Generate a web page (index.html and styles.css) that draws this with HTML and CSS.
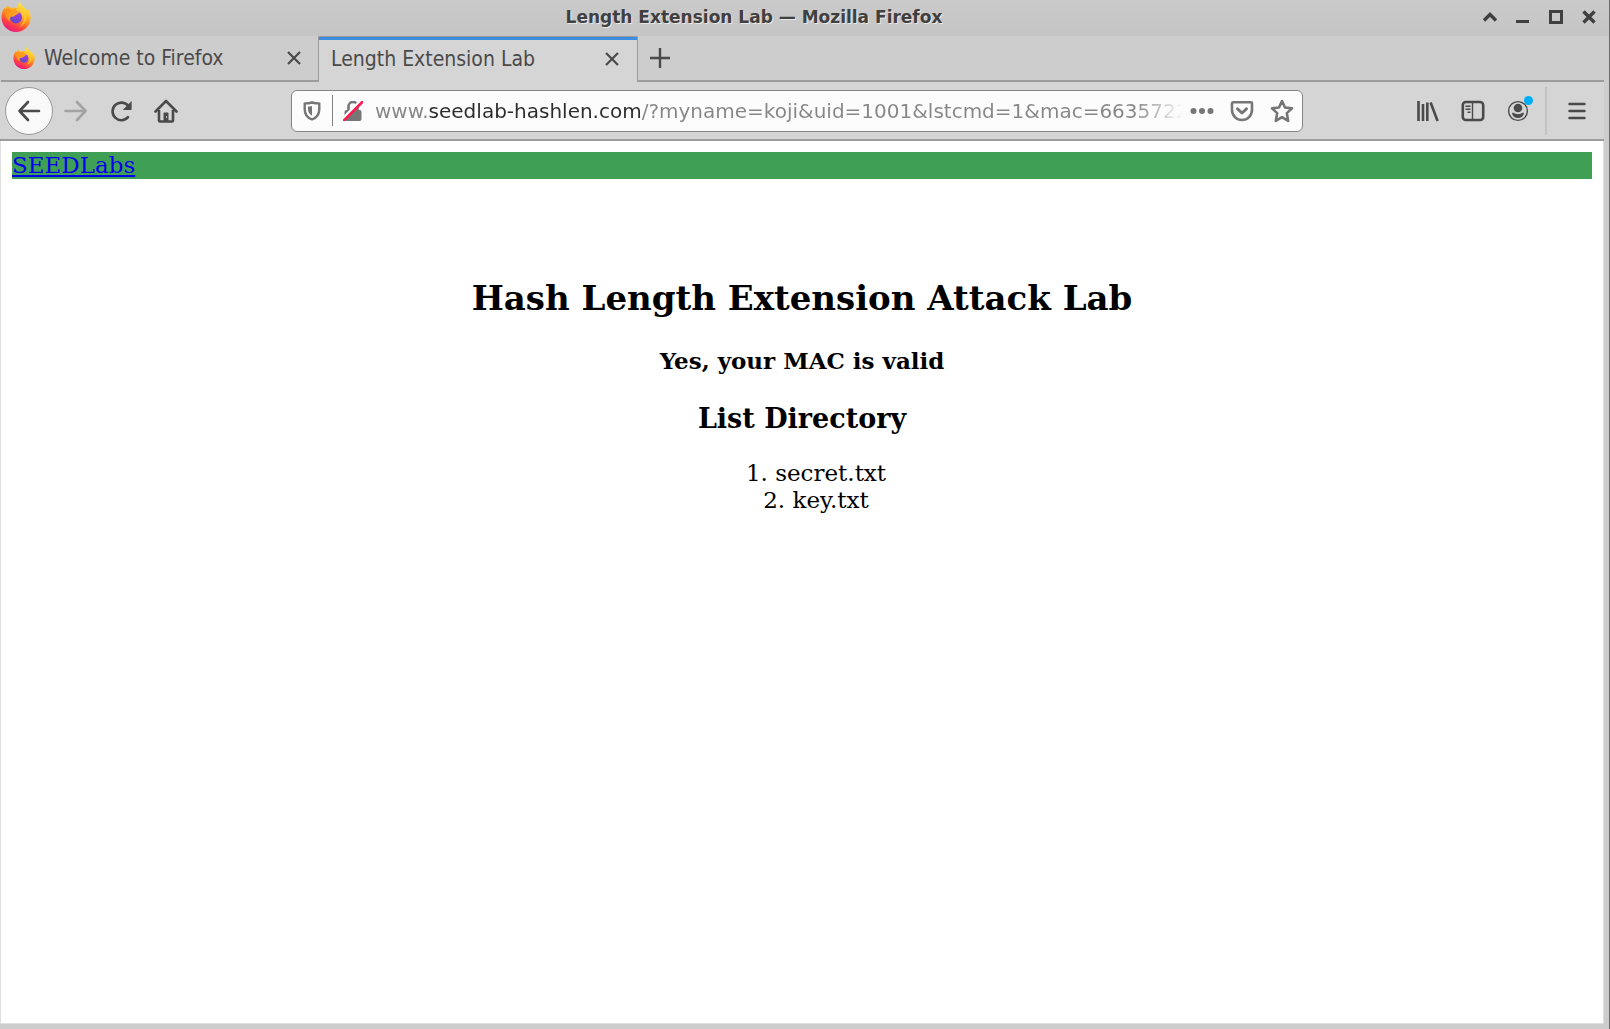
FILE: index.html
```html
<!DOCTYPE html>
<html lang="en">
<head>
<meta charset="utf-8">
<title>Length Extension Lab — Mozilla Firefox</title>
<link rel="stylesheet" href="styles.css">
</head>
<body>
<svg class="defs" width="0" height="0" aria-hidden="true">
  <defs>
    <linearGradient id="flame" x1="0.8" y1="0" x2="0.3" y2="1">
      <stop offset="0" stop-color="#fff04a"/>
      <stop offset="0.3" stop-color="#ffc52e"/>
      <stop offset="0.55" stop-color="#ff8420"/>
      <stop offset="0.78" stop-color="#ff3b47"/>
      <stop offset="1" stop-color="#e31587"/>
    </linearGradient>
    <linearGradient id="globe" x1="0.7" y1="0" x2="0.3" y2="1">
      <stop offset="0" stop-color="#a637e8"/>
      <stop offset="1" stop-color="#5a4fc4"/>
    </linearGradient>
    <linearGradient id="mane" x1="0" y1="0" x2="1" y2="1">
      <stop offset="0" stop-color="#ff8a16"/>
      <stop offset="1" stop-color="#ffb02a"/>
    </linearGradient>
    <symbol id="firefox" viewBox="0 0 30 31">
      <path fill="url(#flame)" d="M19 .5c-2 2-2.500 4-2 6-2-.5-4-.5-6-.1C10 6.400 9.500 6.200 8 5.200 7.300 4.800 7 4.300 6.800 3.800 5.500 4.800 5 6.300 5 7.800 4.300 7.600 4 6.800 4 5.800 1.500 8.500.5 12 .5 16a14.500 14.500 0 0 0 29.200 0c0-3.500-1-6.500-2.800-8.500.2 1 .2 1.800 0 2.500-1-2-2.400-3-4-4.300C21.300 4.300 20 3 19 .5z"/>
      <circle cx="15" cy="16" r="6" fill="url(#globe)"/>
      <path fill="url(#mane)" d="M4.500 8c2-1 5-1 7 .5 1.500-1.500 3-1.800 4.500-1.500-1 1-1.500 2-1.200 3l3.200.7c0 1.500-1.500 2-3.500 2.800-.7 1.500-2 2-3.500 1.500-2.500.5-3 2.500-2 5C5 17 3.500 12 4.500 8z"/>
      <path fill="#ffcf35" opacity=".7" d="M20 5c4 3 6 7 5.500 12-.5 4-3 7-7 8.500 4-4 5-8 3-12-1-2-2-4.500-1.500-8.500z"/>
    </symbol>
    <symbol id="cross" viewBox="0 0 14 14">
      <path d="M1 1l12 12M13 1L1 13" fill="none" stroke="currentColor" stroke-width="2.200"/>
    </symbol>
  </defs>
</svg>
<div class="window">
  <header class="titlebar">
    <svg class="app-icon" aria-hidden="true"><use href="#firefox"/></svg>
    <div class="window-title">Length Extension Lab — Mozilla Firefox</div>
    <div class="window-controls">
      <button type="button" aria-label="Shade"><svg width="14" height="14" viewBox="0 0 14 14"><path d="M1 10.500l6-6 6 6" fill="none" stroke="currentColor" stroke-width="3.400"/></svg></button>
      <button type="button" aria-label="Minimize"><svg width="14" height="14" viewBox="0 0 14 14"><path d="M0 11.500h13" stroke="currentColor" stroke-width="3"/></svg></button>
      <button type="button" aria-label="Maximize"><svg width="14" height="14" viewBox="0 0 14 14"><path d="M1.500 1.500h11v11h-11z" fill="none" stroke="currentColor" stroke-width="3"/></svg></button>
      <button type="button" aria-label="Close window"><svg width="14" height="14" viewBox="0 0 14 14"><path d="M1.500 1.500l11 11M12.500 1.500l-11 11" stroke="currentColor" stroke-width="3.400"/></svg></button>
    </div>
  </header>

  <div class="tabs">
    <div class="tab">
      <svg class="favicon" aria-hidden="true"><use href="#firefox"/></svg>
      <span class="tab-label">Welcome to Firefox</span>
      <button class="tab-close" type="button" aria-label="Close tab"><svg width="14" height="14"><use href="#cross"/></svg></button>
    </div>
    <div class="tab selected">
      <span class="tab-label">Length Extension Lab</span>
      <button class="tab-close" type="button" aria-label="Close tab"><svg width="14" height="14"><use href="#cross"/></svg></button>
    </div>
    <div class="tab-rest">
      <button class="new-tab" type="button" aria-label="New tab"><svg width="20" height="20" viewBox="0 0 20 20"><path d="M10 0v20M0 10h20" stroke="currentColor" stroke-width="2.400"/></svg></button>
    </div>
  </div>

  <nav class="toolbar" aria-label="Navigation">
    <button class="back" type="button" aria-label="Back"><svg width="24" height="24" viewBox="0 0 24 24"><path d="M22 12H2.500M11 3L2.500 12l8.500 9" fill="none" stroke="currentColor" stroke-width="2.600" stroke-linecap="round" stroke-linejoin="round"/></svg></button>
    <button class="tool" type="button" aria-label="Forward" disabled><svg width="24" height="24" viewBox="0 0 24 24"><path d="M1.500 12h20M13 3l8.500 9-8.500 9" fill="none" stroke="currentColor" stroke-width="2.600" stroke-linecap="round" stroke-linejoin="round"/></svg></button>
    <button class="tool" type="button" aria-label="Reload"><svg width="24" height="24" viewBox="0 0 24 24"><path d="M19 18.200A8.800 8.800 0 1 1 19.300 7" fill="none" stroke="currentColor" stroke-width="2.600" stroke-linecap="round"/><path d="M22.600 2v8.200a.8.800 0 0 1-.8.800h-8z" fill="currentColor"/></svg></button>
    <button class="tool" type="button" aria-label="Home"><svg width="24" height="24" viewBox="0 0 24 24"><path d="M1.500 12.500L12 2l10.500 10.500" fill="none" stroke="currentColor" stroke-width="2.600" stroke-linecap="round" stroke-linejoin="round"/><path d="M5 11v10.500a1 1 0 0 0 1 1h12a1 1 0 0 0 1-1V11" fill="none" stroke="currentColor" stroke-width="2.600"/><path d="M9.500 22v-7.500a1 1 0 0 1 1-1h3a1 1 0 0 1 1 1V22z" fill="currentColor"/><path d="M12.600 17.200v1.600" stroke="#d5d5d5"/></svg></button>

    <div class="urlbar">
      <button class="shield" type="button" aria-label="Tracking protection"><svg width="18" height="20" viewBox="0 0 18 20"><path d="M9 1.500c2.500.7 5 .9 7.300.9v5.800c0 4.800-2.800 8.600-7.300 10.300C4.500 16.800 1.700 13 1.700 8.200V2.400c2.300 0 4.800-.2 7.300-.9z" fill="none" stroke="currentColor" stroke-width="2.400" stroke-linejoin="round"/><path d="M9 5v9.800C6.500 13.500 5 11.200 5 8.300V5.600C6.500 5.600 7.800 5.400 9 5z" fill="currentColor"/></svg></button>
      <span class="url-divider"></span>
      <button class="lock" type="button" aria-label="Connection is not secure"><svg width="20" height="20" viewBox="0 0 20 20"><path d="M5.500 10V5.500a4.500 4.500 0 0 1 9 0V10" fill="none" stroke="currentColor" stroke-width="2.600"/><rect x="1.500" y="9" width="17" height="11" rx="2" fill="currentColor"/><path d="M-.5 18L18 -.5" stroke="#fcfcfc" stroke-width="3"/><path d="M1 19.300L19.300 1" stroke="#ff1a50" stroke-width="2.600" stroke-linecap="round"/></svg></button>
      <input class="url" type="text" aria-label="Address" spellcheck="false" value="www.seedlab-hashlen.com/?myname=koji&amp;uid=1001&amp;lstcmd=1&amp;mac=6635722">
      <div class="page-actions">
        <button type="button" aria-label="Page actions"><svg width="24" height="24" viewBox="0 0 24 24" fill="currentColor"><circle cx="3.500" cy="12" r="3"/><circle cx="12" cy="12" r="3"/><circle cx="20.500" cy="12" r="3"/></svg></button>
        <button type="button" aria-label="Save to Pocket"><svg width="24" height="24" viewBox="0 0 24 24" fill="none" stroke="currentColor" stroke-width="2.600" stroke-linecap="round" stroke-linejoin="round"><path d="M3 3.300h18a1 1 0 0 1 1 1V11a10 10 0 0 1-20 0V4.300a1 1 0 0 1 1-1z"/><path d="M7.500 9.800l4.500 4.200 4.500-4.200" stroke-width="3"/></svg></button>
        <button type="button" aria-label="Bookmark this page"><svg width="24" height="24" viewBox="0 0 24 24"><path d="M12 2l3 6.500 7 .9-5.200 4.700 1.400 7.800L12 18.200l-6.200 3.700 1.400-7.800L2 9.400l7-.9z" fill="none" stroke="currentColor" stroke-width="2.600" stroke-linejoin="round"/></svg></button>
      </div>
    </div>

    <button class="tool" type="button" aria-label="Library"><svg width="24" height="24" viewBox="0 0 24 24" fill="none" stroke="currentColor" stroke-width="2.600"><path d="M2.500 2v20M7 5v17M11.300 3.500V22M14.600 3.500l7 18.500"/></svg></button>
    <button class="tool" type="button" aria-label="Sidebars"><svg width="24" height="24" viewBox="0 0 24 24" fill="none" stroke="currentColor"><rect x="1.800" y="3" width="20.400" height="18" rx="3" stroke-width="2.600"/><path d="M11.500 3v18" stroke-width="1.400"/><path d="M4.500 7.200h5M4.500 10.200h5M6.500 13.200h3" stroke-width="1.400"/></svg></button>
    <button class="tool account" type="button" aria-label="Account"><svg width="24" height="24" viewBox="0 0 24 24"><circle cx="12" cy="12" r="9.400" fill="none" stroke="currentColor" stroke-width="1.400"/><circle cx="12" cy="9" r="4.300" fill="currentColor"/><path d="M6 14c1.500-.7 2.500.3 3.500.8 1.500.6 3.500.6 5 0 1-.5 2-1.500 3.500-.8-.5 3.200-2.800 5-6 5s-5.500-1.800-6-5z" fill="currentColor"/></svg><span class="badge"></span></button>
    <span class="tool-divider"></span>
    <button class="tool menu" type="button" aria-label="Open menu"><svg width="24" height="24" viewBox="0 0 24 24"><path d="M4.500 5h15M4.500 12h15M4.500 19h15" stroke="currentColor" stroke-width="2.400" stroke-linecap="round"/></svg></button>
  </nav>

  <main class="page">
    <div class="banner"><a href="#">SEEDLabs</a></div>
    <section class="content">
      <h1>Hash Length Extension Attack Lab</h1>
      <p class="status">Yes, your MAC is valid</p>
      <h2>List Directory</h2>
      <ol>
        <li>secret.txt</li>
        <li>key.txt</li>
      </ol>
    </section>
  </main>
</div>
</body>
</html>
```
FILE: styles.css
```css
* { box-sizing: border-box; }

body {
  margin: 0;
  background: #cdcdcd;
  font-family: "DejaVu Sans", sans-serif;
  color: #4a4a4a;
}

button {
  display: flex;
  align-items: center;
  justify-content: center;
  flex: none;
  margin: 0;
  padding: 0;
  border: 0;
  background: none;
  color: inherit;
}

svg { display: block; flex: none; }
.defs { position: absolute; }

.window {
  display: flex;
  flex-direction: column;
  min-height: 100vh;
  border-right: 1px solid #6a6a6a;
  padding-bottom: 5px;
}

/* Title bar */
.titlebar {
  display: flex;
  align-items: center;
  height: 36px;
  padding: 0 13px 3px 1px;
  background: linear-gradient(#cacaca, #c5c5c5);
  color: #404040;
}
.app-icon { width: 30px; height: 32px; }
.window-title {
  flex: 1;
  padding-right: 6px;
  text-align: center;
  font-size: 17px;
  line-height: 32px;
  font-weight: bold;
  text-shadow: 1px 1px 0 #e8e8e8;
}
.window-controls { display: flex; gap: 19px; }

/* Tabs */
.tabs {
  display: flex;
  height: 46px;
  padding-left: 1px;
  margin-right: 5px;
}
.tab {
  display: flex;
  align-items: center;
  width: 317px;
  padding: 0 17px 0 12px;
  border-bottom: 2px solid #9c9c9c;
}
.favicon { width: 22px; height: 24px; margin-right: 9px; }
.tab-label {
  flex: 1;
  font-family: "DejaVu Sans Condensed", "DejaVu Sans", sans-serif;
  font-size: 21px;
  line-height: 24px;
  white-space: nowrap;
}
.selected {
  width: 320px;
  padding: 0 18px 2px 12px;
  border: 1px solid #9c9c9c;
  border-bottom: 0;
  background: #d5d5d5;
  box-shadow: inset 0 3px #3d8ee0;
}
.tab-rest {
  display: flex;
  align-items: center;
  flex: 1;
  padding-left: 12px;
  border-bottom: 2px solid #9c9c9c;
}

/* Navigation toolbar */
.toolbar {
  display: flex;
  align-items: center;
  height: 59px;
  margin-right: 5px;
  padding: 0 5px;
  background: #d5d5d5;
  border-bottom: 2px solid #9c9c9c;
}
.back {
  width: 48px;
  height: 48px;
  border: 1px solid #999;
  border-radius: 50%;
  background: #f9f9f9;
}
.tool { width: 45px; height: 48px; }
.tool:disabled { color: #a3a3a3; }
.urlbar {
  display: flex;
  align-items: center;
  flex: 1;
  min-width: 0;
  height: 42px;
  margin: 0 102px 0 103px;
  padding: 0 8px 0 11px;
  border: 1px solid #858585;
  border-radius: 6px;
  background: #fcfcfc;
  color: #767676;
}
.url-divider { width: 1px; height: 31px; margin: 0 10px 0 11px; background: #808080; }
.url {
  flex: 1;
  min-width: 0;
  height: 36px;
  margin-left: 12px;
  padding: 0;
  border: 0;
  outline: 0;
  font-family: "DejaVu Sans", sans-serif;
  font-size: 20px;
  color: transparent;
  background: linear-gradient(90deg, #868686 53px, #2c2c2c 53px, #2c2c2c 265px, #868686 265px);
  -webkit-background-clip: text;
  background-clip: text;
  -webkit-mask-image: linear-gradient(to left, transparent, #000 50px);
  mask-image: linear-gradient(to left, transparent, #000 50px);
}
.page-actions { display: flex; gap: 16px; margin-left: 6px; }
.account { position: relative; }
.badge {
  position: absolute;
  top: 9px;
  right: 7px;
  width: 9px;
  height: 9px;
  border-radius: 50%;
  background: #00aef5;
}
.tool-divider { width: 2px; height: 48px; margin: 0 7px 0 5px; background: #c2c2c2; }

/* Page */
.page {
  flex: 1;
  margin-right: 5px;
  padding: 11px;
  border: 1px solid #dedede;
  border-top: 0;
  background: #fff;
  color: #000;
  font-family: "DejaVu Serif", serif;
  font-size: 23px;
  line-height: 27px;
}
.banner { background: #3fa055; }
.banner a { color: #0000ee; }
.content { padding-top: 99px; text-align: center; }
.content h1 { margin: 0 0 29px; font-size: 34px; line-height: 40px; }
.status { margin: 0 0 29px; font-weight: bold; }
.content h2 { margin: 0 0 25px; font-size: 27px; line-height: 32px; }
.content ol { margin: 0; padding-left: 28px; list-style-position: inside; }
```
